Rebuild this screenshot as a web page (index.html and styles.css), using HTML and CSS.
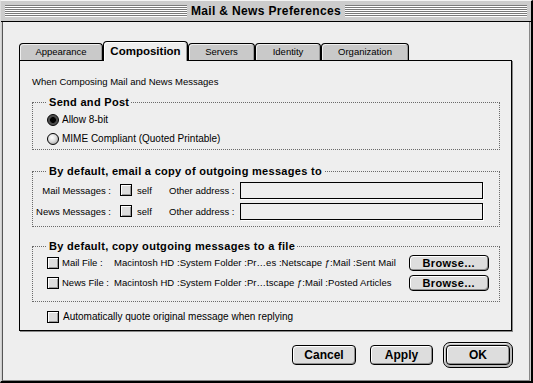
FILE: index.html
```html
<!DOCTYPE html>
<html>
<head>
<meta charset="utf-8">
<title>Mail &amp; News Preferences</title>
<link rel="stylesheet" href="styles.css">
</head>
<body>
<div class="window">
  <div class="titlebar">
    <div class="stripes"></div>
    <div class="title">Mail &amp; News Preferences</div>
    <div class="stripes"></div>
  </div>
  <div class="content">
    <div class="tabs">
      <div class="tab t-app">Appearance</div>
      <div class="tab active t-comp">Composition</div>
      <div class="tab t-srv">Servers</div>
      <div class="tab t-id">Identity</div>
      <div class="tab t-org">Organization</div>
    </div>
    <div class="panel">
      <p class="intro">When Composing Mail and News Messages</p>
      <fieldset class="group g-send">
        <legend>Send and Post</legend>
        <div class="opt"><span class="radio on"></span><span>Allow 8-bit</span></div>
        <div class="opt"><span class="radio"></span><span>MIME Compliant (Quoted Printable)</span></div>
      </fieldset>
      <fieldset class="group g-copy">
        <legend>By default, email a copy of outgoing messages to</legend>
        <div class="addr-row">
          <span class="lbl">Mail Messages :</span><span class="check"></span><span class="self">self</span><span class="other">Other address :</span><span class="field"></span>
        </div>
        <div class="addr-row">
          <span class="lbl">News Messages :</span><span class="check"></span><span class="self">self</span><span class="other">Other address :</span><span class="field"></span>
        </div>
      </fieldset>
      <fieldset class="group g-file">
        <legend>By default, copy outgoing messages to a file</legend>
        <div class="file-row">
          <span class="check"></span><span class="flbl">Mail File :</span><span class="path">Macintosh HD :System Folder :Pr…es :Netscape ƒ:Mail :Sent Mail</span><button class="btn browse">Browse…</button>
        </div>
        <div class="file-row">
          <span class="check"></span><span class="flbl">News File :</span><span class="path">Macintosh HD :System Folder :Pr…tscape ƒ:Mail :Posted Articles</span><button class="btn browse">Browse…</button>
        </div>
      </fieldset>
      <div class="quote"><span class="check"></span><span>Automatically quote original message when replying</span></div>
    </div>
    <div class="actions">
      <button class="btn action cancel">Cancel</button>
      <button class="btn action apply">Apply</button>
      <span class="ring"><button class="btn action ok">OK</button></span>
    </div>
  </div>
</div>
</body>
</html>
```
FILE: styles.css
```css
* { box-sizing: border-box; margin: 0; padding: 0; }
html, body { width: 533px; height: 383px; overflow: hidden; background: #fff; }
body { font-family: "Liberation Sans", Arial, sans-serif; font-size: 9.5px; color: #000; white-space: nowrap; }

.window {
  width: 533px; height: 383px;
  display: flex; flex-direction: column;
  background: #cccccc;
  border-top: 1px solid #f4f4f4;
  border-left: 1px solid #dddddd;
  border-right: 2px solid #000;
  border-bottom: 2px solid #000;
}

.titlebar {
  height: 21px;
  display: flex; align-items: center;
  padding: 0 4px;
  border-bottom: 1px solid #000;
  background: #cccccc;
}
.stripes {
  flex: 1; height: 12px;
  background: repeating-linear-gradient(to bottom, #7a7a7a 0 1px, #ffffff 1px 2px);
}
.title {
  padding: 0 4px;
  font-weight: bold; font-size: 12px; line-height: 14px;
  letter-spacing: 0.35px;
}

.content {
  flex: 1;
  margin: 0 1px 0 1px;
  background: #eeeeee;
  border-left: 1px solid #555;
  border-right: 1px solid #888;
  border-bottom: 1px solid #888;
  padding: 19px 16px 0 16px;
}

.tabs { display: flex; align-items: flex-end; height: 19px; position: relative; z-index: 1; }
.tab {
  height: 17px;
  border: 1px solid #000; border-bottom: none;
  border-radius: 4px 4px 0 0;
  background: #c9c9c9;
  box-shadow: inset 1px 1px 0 #eeeeee, inset -1px 0 0 #999;
  text-align: center; line-height: 15px;
}
.tab.active {
  height: 20px; margin-bottom: -1px;
  background: #eeeeee;
  box-shadow: inset 1px 1px 0 #ffffff, inset -1px 0 0 #999;
  font-weight: bold; font-size: 11.5px; line-height: 19px;
}
.t-app { width: 84px; }
.t-comp { width: 85px; }
.t-srv { width: 67px; }
.t-id { width: 66px; }
.t-org { width: 88px; }

.panel {
  width: 493px; height: 271px;
  border: 1px solid #000;
  background: #eeeeee;
  box-shadow: 1px 1px 0 #888;
  padding: 15px 11px 0 12px;
}
.intro { line-height: 12px; }

.group {
  border: 1px dotted #6a6a6a;
  padding: 0;
}
.group legend {
  margin-left: 14px; padding: 0 2px;
  font-weight: bold; font-size: 11px; line-height: 14px;
  letter-spacing: 0.3px;
}
.g-send { margin-top: 7px; padding: 1px 0 1px 0; }
.g-copy { margin-top: 14px; padding: 3px 0 6px 0; }
.g-file { margin-top: 12px; padding: 1px 10px 10px 0; }

.opt { height: 19px; display: flex; align-items: center; padding-left: 14px; gap: 3px; font-size: 10px; }

.radio {
  width: 12px; height: 12px; border-radius: 50%;
  border: 1px solid #000;
  background: radial-gradient(circle at 40% 35%, #ffffff 0, #dddddd 45%, #8a8a8a 100%);
}
.radio.on {
  background: radial-gradient(circle at 50% 50%, #000 0 2.6px, #444 3.2px, #6a6a6a 100%);
}

.check {
  width: 12px; height: 12px; flex: none;
  border: 1px solid #000;
  background: #dddddd;
  box-shadow: inset 1px 1px 0 #ffffff, inset -1px -1px 0 #999;
}

.addr-row { height: 18px; display: flex; align-items: center; }
.addr-row + .addr-row { margin-top: 3px; }
.lbl { width: 78px; flex: none; display: flex; justify-content: flex-end; }
.addr-row .check { margin-left: 9px; }
.self { width: 37px; flex: none; padding-left: 5px; }
.other { width: 71px; flex: none; }
.field {
  width: 243px; height: 17px; flex: none;
  border: 1px solid #000;
  background: #eeeeee;
  box-shadow: 1px 1px 0 #fff;
}

.file-row { height: 17px; display: flex; align-items: center; }
.file-row + .file-row { margin-top: 3px; }
.file-row .check { margin-left: 14px; }
.flbl { width: 55px; flex: none; padding-left: 3px; }
.path { flex: 1; overflow: hidden; letter-spacing: 0.05px; }

.btn {
  font-family: "Liberation Sans", Arial, sans-serif;
  font-weight: bold; color: #000;
  border: 1px solid #000; border-radius: 4px;
  background: #dddddd;
  box-shadow: inset 1px 1px 0 #ffffff, inset -1px -1px 0 #8f8f8f;
}
.browse { width: 80px; height: 16px; flex: none; font-size: 11px; line-height: 14px; letter-spacing: 0.3px; }

.quote { height: 17px; margin-top: 6px; display: flex; align-items: center; padding-left: 15px; gap: 4px; font-size: 10px; }

.actions { display: flex; justify-content: flex-end; align-items: center; height: 26px; margin-top: 11px; }
.action { height: 20px; font-size: 12px; flex: none; }
.cancel { width: 64px; }
.apply { width: 63px; margin-left: 14px; margin-right: 10px; }
.ring {
  display: flex; width: 70px; height: 26px; flex: none;
  padding: 2px;
  border: 1px solid #000; border-radius: 7px;
  background: #bdbdbd;
  box-shadow: inset 1px 1px 0 #e8e8e8;
}
.ok { width: 64px; }
```
